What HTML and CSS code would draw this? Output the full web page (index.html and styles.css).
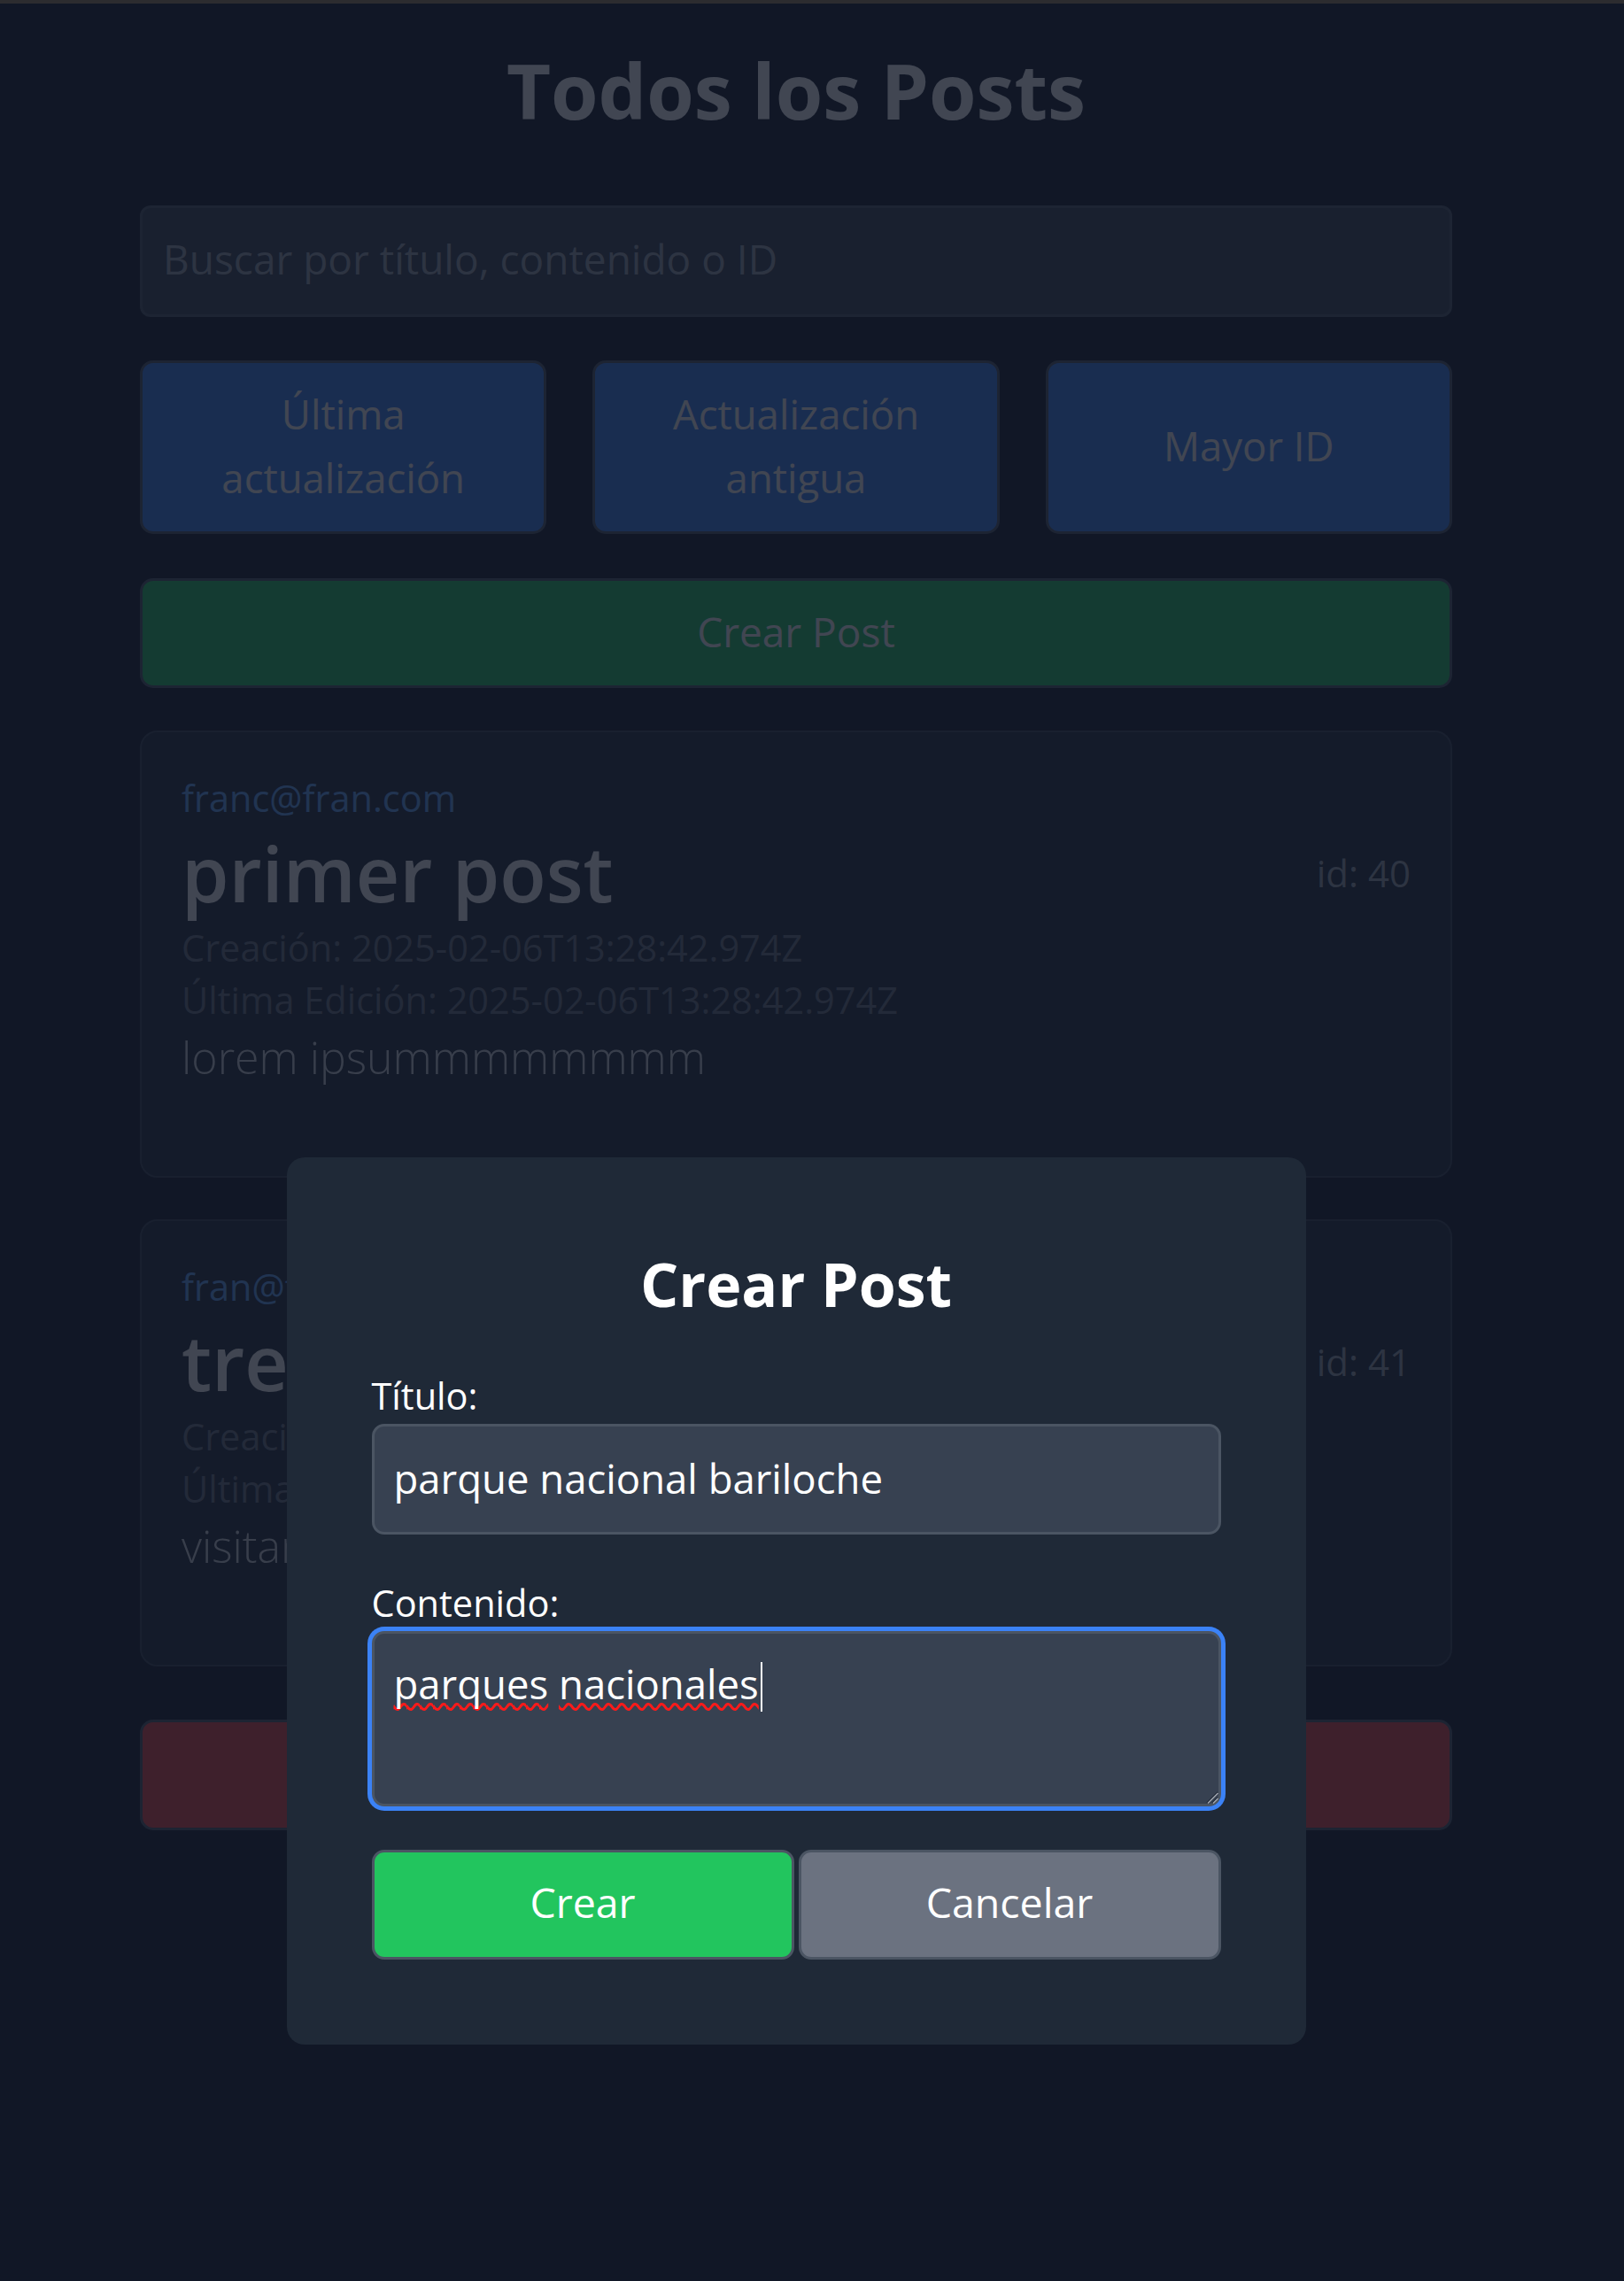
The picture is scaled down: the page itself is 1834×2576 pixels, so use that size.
FILE: index.html
```html
<!DOCTYPE html>
<html lang="es">
<head>
<meta charset="utf-8">
<title>Todos los Posts</title>
<link rel="stylesheet" href="styles.css">
</head>
<body>
<div class="chrome-line"></div>
<div class="page">
  <main class="container">
    <h1 class="page-title">Todos los Posts</h1>
    <input class="search" type="text" placeholder="Buscar por título, contenido o ID">
    <div class="sort-row">
      <button class="btn btn-sort" type="button">Última actualización</button>
      <button class="btn btn-sort" type="button">Actualización antigua</button>
      <button class="btn btn-sort" type="button">Mayor ID</button>
    </div>
    <button class="btn btn-create" type="button">Crear Post</button>

    <article class="post-card">
      <div class="post-author">franc@fran.com</div>
      <div class="post-head">
        <h2 class="post-title">primer post</h2>
        <span class="post-id">id: 40</span>
      </div>
      <p class="post-date">Creación: 2025-02-06T13:28:42.974Z</p>
      <p class="post-date">Última Edición: 2025-02-06T13:28:42.974Z</p>
      <p class="post-body">lorem ipsummmmmmmm</p>
    </article>

    <article class="post-card">
      <div class="post-author">fran@fran.com</div>
      <div class="post-head">
        <h2 class="post-title">tres</h2>
        <span class="post-id">id: 41</span>
      </div>
      <p class="post-date">Creación: 2025-02-06T13:41:07.312Z</p>
      <p class="post-date">Última Edición: 2025-02-06T13:41:07.312Z</p>
      <p class="post-body">visitar el cerro catedral</p>
    </article>

    <button class="btn btn-logout" type="button">Cerrar sesión</button>
  </main>
</div>

<div class="overlay">
  <div class="overlay-inner">
    <form class="modal">
      <h2 class="modal-title">Crear Post</h2>
      <label class="field-label" for="titulo">Título:</label>
      <input id="titulo" class="field-input" type="text" value="parque nacional bariloche">
      <label class="field-label label-gap">Contenido:</label>
      <div class="field-textarea" role="textbox" aria-multiline="true"><span class="misspelled">parques</span> <span class="misspelled">nacionales</span><span class="caret"></span><svg class="resize-grip" width="14" height="14" viewBox="0 0 14 14"><line x1="13" y1="1" x2="1" y2="13" stroke="#1f2937" stroke-width="1.4"/><line x1="13.5" y1="2" x2="2" y2="13.5" stroke="#a3a8b1" stroke-width="1.4"/><line x1="13" y1="7" x2="7" y2="13" stroke="#1f2937" stroke-width="1.4"/><line x1="13.5" y1="8" x2="8" y2="13.5" stroke="#a3a8b1" stroke-width="1.4"/></svg></div>
      <div class="modal-actions">
        <button type="button" class="btn-modal btn-confirm">Crear</button>
        <button type="button" class="btn-modal btn-cancel">Cancelar</button>
      </div>
    </form>
  </div>
</div>
</body>
</html>
```

FILE: styles.css
```css
* { box-sizing: border-box; }

html, body {
  margin: 0;
  padding: 0;
}

body {
  background: #111827;
  color: #ffffff;
  font-family: "Open Sans", "Noto Sans", sans-serif;
  min-height: 2576px;
}

.chrome-line {
  position: fixed;
  top: 0;
  left: 0;
  right: 0;
  height: 4px;
  background: #2c2c2f;
  z-index: 30;
}

.page {
  width: 1798px;
}

.container {
  width: 1482px;
  margin: 0 auto;
  padding: 47px 0 100px;
}

.page-title {
  margin: 0;
  font-size: 86.5px;
  line-height: 110px;
  font-weight: 700;
  text-align: center;
  color: #ffffff;
}

.search {
  display: block;
  width: 100%;
  height: 126px;
  margin-top: 75px;
  padding: 0 23px 6px;
  border: 3px solid #4b5563;
  border-radius: 12px;
  background: #374151;
  color: #ffffff;
  font-family: inherit;
  font-size: 46px;
  outline: none;
}

.search::placeholder {
  color: #9ca3af;
}

.sort-row {
  display: grid;
  grid-template-columns: repeat(3, 1fr);
  gap: 52px;
  margin-top: 49px;
}

.btn {
  font-family: inherit;
  color: #ffffff;
  border: 3px solid #4b5563;
  border-radius: 15px;
  cursor: pointer;
}

.btn-sort {
  height: 196px;
  padding: 0 22px 4px;
  background: #3b82f6;
  font-size: 45.5px;
  line-height: 72px;
}

.btn-create {
  display: block;
  width: 100%;
  height: 124px;
  margin-top: 50px;
  padding: 0 0 5px;
  background: #22c55e;
  font-size: 46px;
}

.post-card {
  height: 505px;
  margin-top: 48px;
  padding: 44px 45px 0;
  border: 2px solid #374151;
  border-radius: 20px;
  background: #1f2937;
}

.post-card + .post-card {
  margin-top: 47px;
}

.post-author {
  font-size: 41.5px;
  line-height: 60px;
  color: #60a5fa;
}

.post-head {
  display: flex;
  align-items: center;
  justify-content: space-between;
  height: 110px;
}

.post-title {
  margin: 0;
  font-size: 86px;
  line-height: 110px;
  font-weight: 600;
  color: #ffffff;
}

.post-id {
  font-size: 42px;
  line-height: 62px;
  color: #9ca3af;
}

.post-date {
  margin: 0;
  font-size: 41.5px;
  line-height: 59px;
  color: #6b7280;
}

.post-body {
  margin: 0;
  font-size: 50px;
  line-height: 70px;
  font-weight: 300;
  color: #d1d5db;
}

.btn-logout {
  display: block;
  width: 100%;
  height: 125px;
  margin-top: 60px;
  background: #ef4444;
  font-size: 46px;
}

/* Modal */
.overlay {
  position: fixed;
  inset: 0;
  background: rgba(17, 24, 39, 0.8);
  z-index: 10;
}

.overlay-inner {
  width: 1798px;
  padding-top: 1307px;
}

.modal {
  width: 1151px;
  margin: 0 auto;
  padding: 98px 96px 96px;
  background: #1f2937;
  border-radius: 20px;
}

.modal-title {
  margin: 0 0 51px;
  text-align: center;
  font-size: 68px;
  line-height: 90px;
  font-weight: 700;
  color: #ffffff;
}

.field-label {
  display: block;
  margin-bottom: 2px;
  font-size: 41.5px;
  line-height: 60px;
  font-weight: 500;
  color: #ffffff;
}

.label-gap {
  margin-top: 47px;
}

.field-input {
  display: block;
  width: 100%;
  height: 125px;
  padding: 0 22px 4px;
  border: 3px solid #4b5563;
  border-radius: 14px;
  background: #374151;
  color: #ffffff;
  font-family: inherit;
  font-size: 45.5px;
  outline: none;
}

.field-textarea {
  position: relative;
  height: 198px;
  padding: 22px;
  border: 3px solid #4b5563;
  border-radius: 14px;
  background: #374151;
  color: #ffffff;
  font-size: 45.5px;
  line-height: 68px;
  box-shadow: 0 0 0 5px #3b82f6;
}

.misspelled {
  text-decoration: underline wavy #ff1a1a;
  text-decoration-thickness: 3px;
  text-underline-offset: 4px;
  text-decoration-skip-ink: none;
}

.caret {
  display: inline-block;
  width: 2px;
  height: 56px;
  margin-left: 2px;
  background: #ffffff;
  vertical-align: -14px;
}

.resize-grip {
  position: absolute;
  right: 0;
  bottom: 0;
}

.modal-actions {
  display: flex;
  gap: 5px;
  margin-top: 49px;
}

.btn-modal {
  flex: 1;
  height: 124px;
  padding: 0 0 6px;
  border: 3px solid #4b5563;
  border-radius: 14px;
  font-family: inherit;
  font-size: 46.5px;
  color: #ffffff;
  cursor: pointer;
}

.btn-confirm {
  background: #22c55e;
}

.btn-cancel {
  background: #6b7280;
}
```
